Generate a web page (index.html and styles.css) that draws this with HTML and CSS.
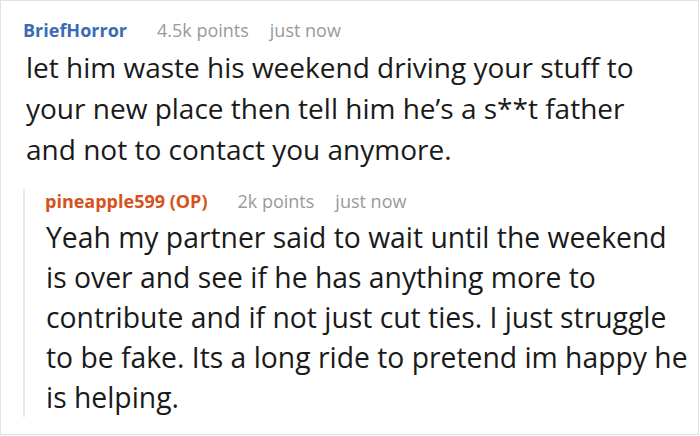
FILE: index.html
```html
<!DOCTYPE html>
<html>
<head>
<meta charset="utf-8">
<link rel="stylesheet" href="styles.css">
</head>
<body>
<div class="frame">
  <div class="comment">
    <div class="meta">
      <span class="author">BriefHorror</span>
      <span class="info">4.5k points</span>
      <span class="info">just now</span>
    </div>
    <p class="text">let him waste his weekend driving your stuff to your new place then tell him he’s a s**t father and not to contact you anymore.</p>
    <div class="reply">
      <div class="meta">
        <span class="author op">pineapple599 (OP)</span>
        <span class="info">2k points</span>
        <span class="info">just now</span>
      </div>
      <p class="text reply-text">Yeah my partner said to wait until the weekend<br>is over and see if he has anything more to<br>contribute and if not just cut ties. I just struggle<br>to be fake. Its a long ride to pretend im happy he<br>is helping.</p>
    </div>
  </div>
</div>
</body>
</html>
```

FILE: styles.css
```css
html, body {
  margin: 0;
  padding: 0;
  background: #fff;
}
.frame {
  width: 699px;
  height: 435px;
  box-sizing: border-box;
  border: 1px solid #e2e2e2;
  overflow: hidden;
  font-family: "Open Sans", "Noto Sans", sans-serif;
  color: #1a1a1a;
}
.comment {
  padding: 17px 0 0 22px;
}
.meta {
  display: flex;
  align-items: baseline;
  font-size: 18px;
  line-height: 24px;
  white-space: nowrap;
}
.author {
  font-weight: 700;
  color: #3a6bb4;
}
.author.op {
  color: #d5521c;
}
.author + .info {
  margin-left: 30px;
}
.info + .info {
  margin-left: 21px;
}
.info {
  color: #9a9a9a;
}
.text {
  margin: 5px 0 0 3px;
  font-size: 28px;
  line-height: 41px;
  width: 650px;
}
.reply {
  margin-top: 30px;
  border-left: 2px solid #e8e8e8;
  padding-left: 20px;
}
.reply .meta {
  margin-top: -11px;
}
.reply-text {
  margin: 4px 0 0 1px;
  font-size: 28.3px;
  line-height: 40px;
  white-space: nowrap;
  width: 640px;
}
```
